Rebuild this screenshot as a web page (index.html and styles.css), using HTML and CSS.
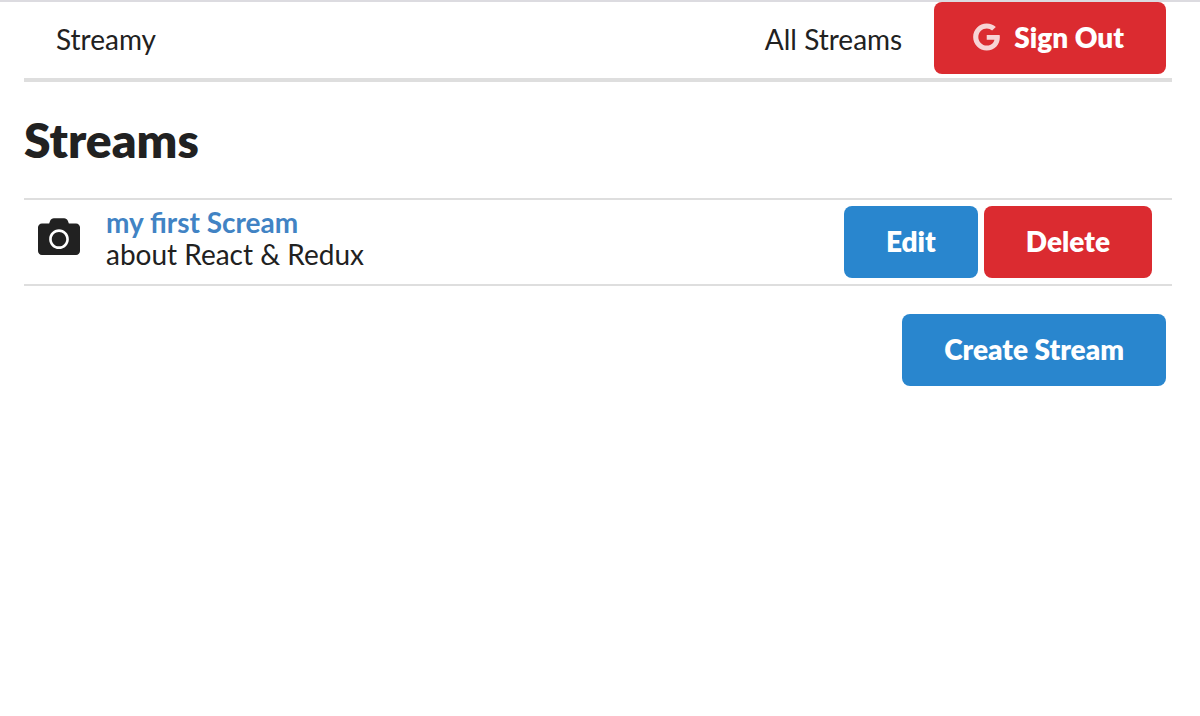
FILE: index.html
```html
<!DOCTYPE html>
<html lang="en">
<head>
<meta charset="utf-8">
<title>Streamy</title>
<link rel="stylesheet" href="styles.css">
</head>
<body>
<div class="container">
  <nav class="menu">
    <a class="item" href="#">Streamy</a>
    <div class="menu-right">
      <a class="item" href="#">All Streams</a>
      <button class="button red" type="button">
        <svg class="google-icon" viewBox="0 0 488 512" aria-hidden="true"><path d="M488 261.8C488 403.3 391.1 504 248 504 110.8 504 0 393.2 0 256S110.8 8 248 8c66.8 0 123 24.500 166.300 64.900l-67.500 64.900C258.500 52.600 94.300 116.600 94.300 256c0 86.500 69.100 156.600 153.700 156.600 98.200 0 135-70.400 140.800-106.900H248v-85.300h236.100c2.300 12.700 3.900 24.900 3.900 41.400z"/></svg>
        Sign Out
      </button>
    </div>
  </nav>
  <main>
    <h1 class="title">Streams</h1>
    <ul class="list">
      <li class="stream">
        <svg class="camera-icon" viewBox="0 0 512 448" aria-hidden="true"><path d="M512 112v288c0 26.500-21.500 48-48 48H48c-26.500 0-48-21.500-48-48V112c0-26.500 21.500-48 48-48h88l12.300-32.900c7-18.700 24.900-31.100 44.900-31.100h125.500c20 0 37.900 12.400 44.900 31.100L376 64h88c26.500 0 48 21.500 48 48zM376 256c0-66.200-53.800-120-120-120s-120 53.800-120 120 53.800 120 120 120 120-53.800 120-120zm-32 0c0 48.500-39.500 88-88 88s-88-39.500-88-88 39.500-88 88-88 88 39.500 88 88z"/></svg>
        <div class="content">
          <a class="stream-title" href="#">my first Scream</a>
          <p class="description">about React &amp; Redux</p>
        </div>
        <div class="actions">
          <button class="button blue" type="button">Edit</button>
          <button class="button red" type="button">Delete</button>
        </div>
      </li>
    </ul>
    <div class="create">
      <button class="button blue" type="button">Create Stream</button>
    </div>
  </main>
</div>
</body>
</html>
```
FILE: styles.css
```css
* {
  box-sizing: border-box;
}

body {
  margin: 0;
  border-top: 2px solid #dcdbe0;
  background: #fff;
  color: #212121;
  font-family: Lato, "Liberation Sans", sans-serif;
  font-size: 28px;
  line-height: 32px;
}

.container {
  padding: 0 28px 0 24px;
}

.menu {
  display: flex;
  align-items: stretch;
  justify-content: space-between;
  border-bottom: 4px solid #dedede;
}

.menu-right {
  display: flex;
  align-items: flex-start;
  padding-right: 6px;
}

.item {
  display: flex;
  align-items: center;
  padding: 21px 32px 23px;
  color: inherit;
  text-decoration: none;
}

.button {
  display: inline-flex;
  align-items: center;
  justify-content: center;
  gap: 14px;
  padding: 19px 42px 21px;
  border: 0;
  border-radius: 8px;
  color: #fff;
  font: inherit;
  font-weight: 800;
  cursor: pointer;
}

.red {
  background: #db2b30;
}

.blue {
  background: #2986ce;
}

.google-icon {
  width: 27px;
  height: 28px;
  margin-left: -3px;
  fill: #fff;
  opacity: 0.8;
}

.title {
  margin: 27px 0;
  font-size: 48px;
  font-weight: 800;
  line-height: 62px;
}

.list {
  margin: 0;
  padding: 0;
  border: solid #dedede;
  border-width: 2px 0;
  list-style: none;
}

.stream {
  display: flex;
  align-items: flex-start;
  padding: 6px 20px 6px 14px;
}

.camera-icon {
  width: 42px;
  height: 37px;
  margin: 12px 26px 0 0;
  fill: #212121;
}

.content {
  flex: 1;
}

.stream-title {
  display: block;
  color: #4183c4;
  font-weight: 700;
  text-decoration: none;
}

.description {
  margin: 0;
}

.actions {
  display: flex;
  gap: 6px;
}

.create {
  display: flex;
  justify-content: flex-end;
  padding: 28px 6px 0 0;
}
```
